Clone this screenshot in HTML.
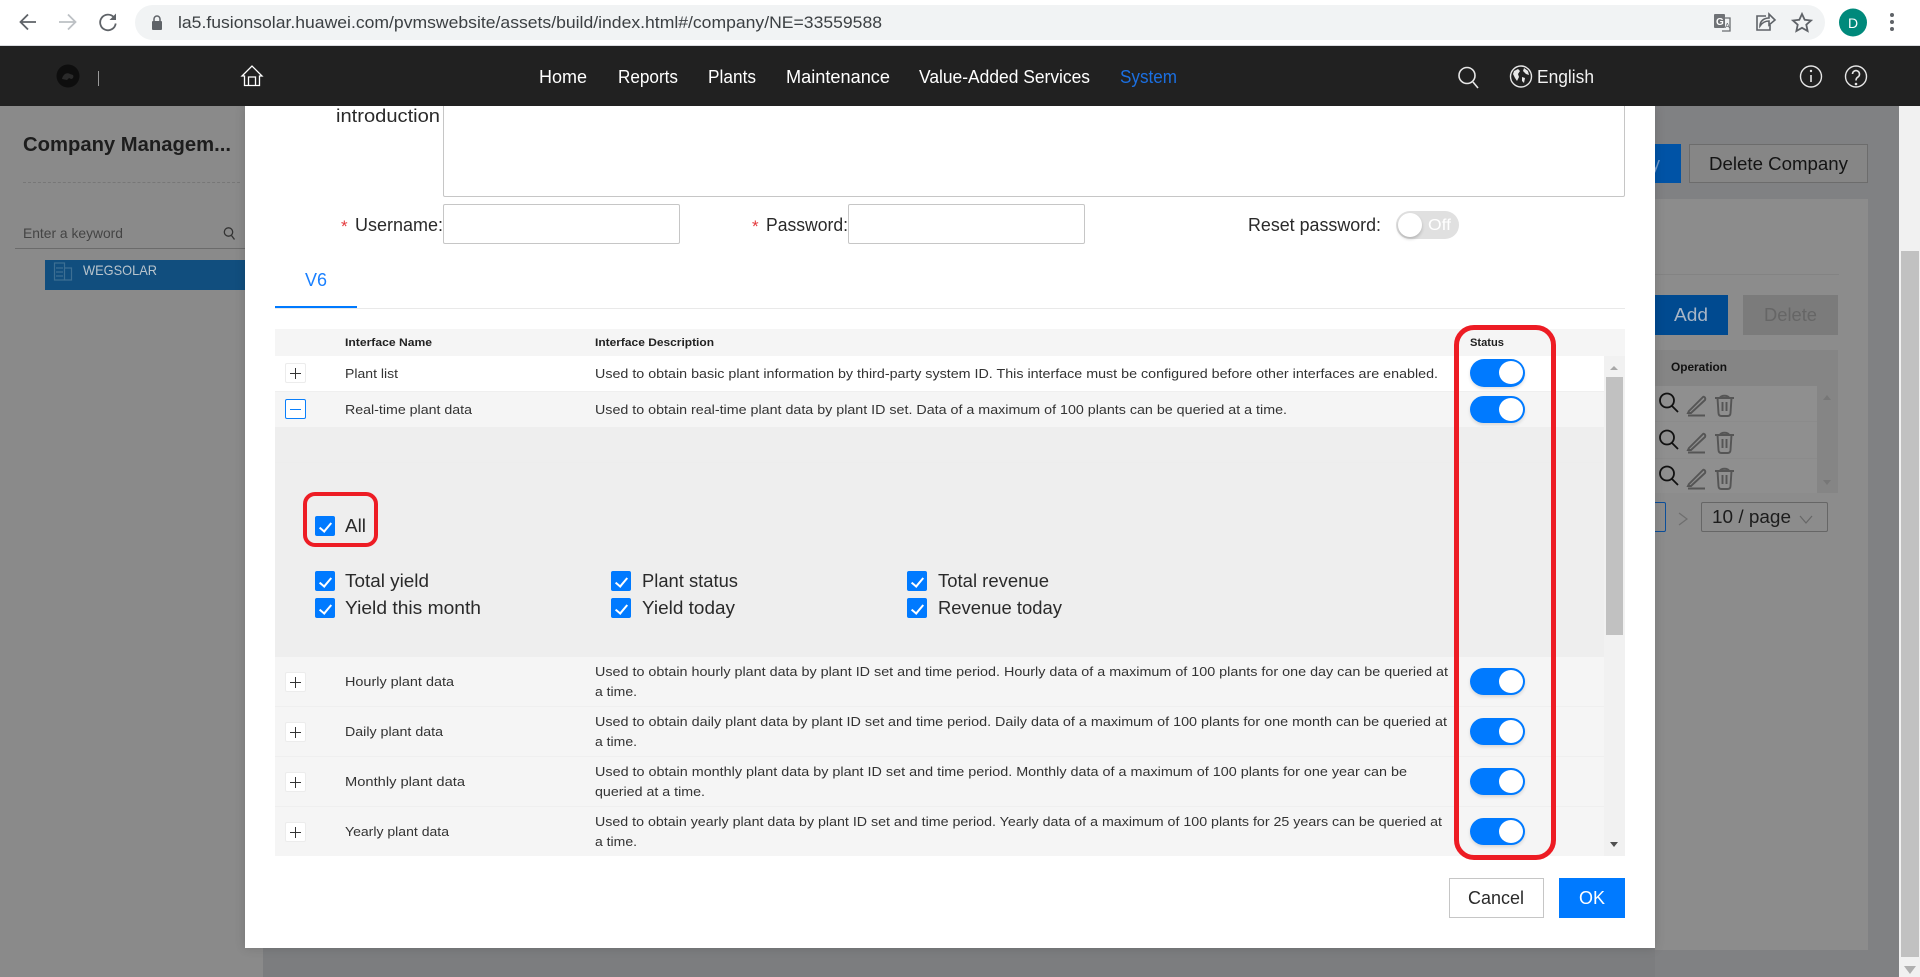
<!DOCTYPE html>
<html lang="en"><head><meta charset="utf-8"><title>Company Management</title>
<style>
html,body{margin:0;padding:0;width:1920px;height:977px;overflow:hidden;background:#7c7d7f}
div{position:absolute;box-sizing:border-box}
svg{position:absolute;left:0;top:0}
text{font-family:"Liberation Sans",sans-serif}
.tg{width:55px;height:27px;border-radius:14px;background:#007aff;left:1470px;box-shadow:0 2px 3px rgba(0,0,0,.12)}
.tg:after{content:"";position:absolute;right:2px;top:2px;width:24px;height:23px;border-radius:50%;background:#fff}
.cb{width:20px;height:20px;border-radius:2px;background:#007aff}
.cb:after{content:"";position:absolute;left:7px;top:3.5px;width:5px;height:10px;border:solid #fff;border-width:0 2px 2px 0;transform:rotate(40deg)}
.pb{left:285px;width:21px;height:20px;background:#fff;border:1px solid #ececec;border-radius:2px}
.pb:before{content:"";position:absolute;left:4px;top:9px;width:11px;height:1px;background:#333}
.pb:after{content:"";position:absolute;left:9px;top:4px;width:1px;height:11px;background:#333}
</style></head><body>

<!-- browser chrome -->
<div style="left:0;top:0;width:1920px;height:46px;background:#fff;border-bottom:1px solid #dadce0"></div>
<div style="left:135px;top:5px;width:1690px;height:35px;border-radius:18px;background:#f1f3f4"></div>

<!-- backdrop page -->
<div style="left:0;top:106px;width:263px;height:871px;background:#8a8a8a"></div>
<div style="left:1655px;top:106px;width:244px;height:871px;background:#808183"></div>
<div style="left:1655px;top:199px;width:213px;height:751px;background:#8c8c8c"></div>
<div style="left:1899px;top:106px;width:21px;height:871px;background:#f1f1f1"></div>
<div style="left:1901px;top:251px;width:18px;height:706px;background:#c1c1c1"></div>
<div style="left:23px;top:182px;width:217px;border-top:1px dashed #777"></div>
<div style="left:15px;top:248px;width:230px;height:1px;background:#6b6b6b"></div>
<div style="left:45px;top:260px;width:200px;height:30px;background:#114e7e"></div>
<div style="left:1655px;top:144px;width:26px;height:39px;background:#0053a6"></div>
<div style="left:1689px;top:144px;width:179px;height:39px;border:1px solid #6c6c6c;background:#868686"></div>
<div style="left:1655px;top:274px;width:184px;height:1px;background:#838383"></div>
<div style="left:1655px;top:295px;width:73px;height:40px;background:#004a90"></div>
<div style="left:1743px;top:295px;width:95px;height:40px;background:#7b7b7b"></div>
<div style="left:1655px;top:350px;width:183px;height:143px;background:#858585"></div>
<div style="left:1655px;top:386px;width:162px;height:107px;background:#8f8f8f"></div>
<div style="left:1655px;top:421px;width:162px;height:1px;background:#8b8b8b"></div>
<div style="left:1655px;top:458px;width:162px;height:1px;background:#8b8b8b"></div>
<div style="left:1640px;top:502px;width:26px;height:30px;border:1px solid #0b4e9a;border-radius:2px"></div>
<div style="left:1701px;top:502px;width:127px;height:30px;border:1px solid #666;border-radius:2px"></div>

<!-- modal -->
<div style="left:245px;top:106px;width:1410px;height:842px;background:#fff;box-shadow:0 0 10px rgba(0,0,0,.15)"></div>
<div style="left:443px;top:100px;width:1182px;height:97px;background:#fff;border:1px solid #c6c6c6;border-radius:2px"></div>
<div style="left:443px;top:204px;width:237px;height:40px;background:#fff;border:1px solid #c6c6c6;border-radius:2px"></div>
<div style="left:848px;top:204px;width:237px;height:40px;background:#fff;border:1px solid #c6c6c6;border-radius:2px"></div>
<div style="left:1396px;top:211px;width:63px;height:28px;border-radius:14px;background:#e0e0e0"></div>
<div style="left:1398px;top:213px;width:24px;height:24px;border-radius:50%;background:#fff;box-shadow:0 2px 3px rgba(0,0,0,.2)"></div>

<div style="left:275px;top:308px;width:1350px;height:1px;background:#e9e9e9"></div>
<div style="left:275px;top:306px;width:82px;height:2px;background:#007aff"></div>

<!-- table -->
<div style="left:275px;top:329px;width:1350px;height:27px;background:#f5f5f5"></div>
<div style="left:275px;top:356px;width:1329px;height:35px;background:#fff"></div>
<div style="left:275px;top:391px;width:1329px;height:36px;background:#f5f5f5;border-top:1px solid #efefef"></div>
<div style="left:275px;top:427px;width:1329px;height:230px;background:#eee"></div>
<div style="left:275px;top:462px;width:1329px;height:1px;background:#ededed"></div>
<div style="left:275px;top:657px;width:1329px;height:50px;background:#f5f5f5;border-bottom:1px solid #efefef"></div>
<div style="left:275px;top:707px;width:1329px;height:50px;background:#f5f5f5;border-bottom:1px solid #efefef"></div>
<div style="left:275px;top:757px;width:1329px;height:50px;background:#f5f5f5;border-bottom:1px solid #efefef"></div>
<div style="left:275px;top:807px;width:1329px;height:49px;background:#f5f5f5"></div>
<div style="left:1604px;top:356px;width:21px;height:500px;background:#f1f1f1"></div>
<div style="left:1606px;top:377px;width:17px;height:258px;background:#c1c1c1"></div>

<div class="pb" style="top:363px"></div>
<div style="left:285px;top:399px;width:21px;height:20px;background:#fff;border:1px solid #0a7ffb;border-radius:2px"></div>
<div style="left:290px;top:409px;width:11px;height:1px;background:#0a7ffb"></div>
<div class="pb" style="top:672px"></div>
<div class="pb" style="top:722px"></div>
<div class="pb" style="top:772px"></div>
<div class="pb" style="top:822px"></div>

<div class="cb" style="left:315px;top:516px"></div>
<div class="cb" style="left:315px;top:571px"></div>
<div class="cb" style="left:315px;top:598px"></div>
<div class="cb" style="left:611px;top:571px"></div>
<div class="cb" style="left:611px;top:598px"></div>
<div class="cb" style="left:907px;top:571px"></div>
<div class="cb" style="left:907px;top:598px"></div>

<div class="tg" style="top:359px;height:28px"></div>
<div class="tg" style="top:396px"></div>
<div class="tg" style="top:668px"></div>
<div class="tg" style="top:718px"></div>
<div class="tg" style="top:768px"></div>
<div class="tg" style="top:818px"></div>

<div style="left:1449px;top:878px;width:95px;height:40px;background:#fff;border:1px solid #c6c6c6"></div>
<div style="left:1559px;top:878px;width:66px;height:40px;background:#007aff"></div>

<!-- red annotation boxes -->
<div style="left:303px;top:492px;width:75px;height:55px;border:4px solid #ed1c24;border-radius:12px"></div>
<div style="left:1454px;top:325px;width:102px;height:535px;border:5px solid #ed1c24;border-radius:20px"></div>

<!-- header bar -->
<div style="left:0;top:46px;width:1920px;height:60px;background:#212121"></div>

<svg width="1920" height="977" viewBox="0 0 1920 977" xmlns="http://www.w3.org/2000/svg">
<!-- chrome icons -->
<g fill="none" stroke="#5f6368" stroke-width="1.800">
<path d="M36 22H21M28 14.500L20.500 22l7.500 7.500"/>
<path d="M59 22h16M68 14.500l7.500 7.500-7.500 7.500" stroke="#bcc0c4"/>
<path d="M114 17.500a7.800 7.800 0 1 0 1.700 6"/>
</g>
<path d="M116 13.500v6.500h-6.500z" fill="#5f6368"/>
<rect x="152" y="21" width="10" height="9" rx="1" fill="#5f6368"/>
<path d="M154 21v-2a3 3 0 0 1 6 0v2" fill="none" stroke="#5f6368" stroke-width="1.500"/>
<text x="178" y="28" font-size="17" fill="#3c4043" textLength="704" lengthAdjust="spacingAndGlyphs">la5.fusionsolar.huawei.com/pvmswebsite/assets/build/index.html#/company/NE=33559588</text>
<path d="M1722 18h8v13h-8" fill="#f1f3f4" stroke="#6a6d70" stroke-width="1.300"/>
<rect x="1714" y="14" width="11" height="14" rx="1" fill="#6f7276"/>
<text x="1716" y="25" font-size="10" font-weight="700" fill="#fff">G</text>
<text x="1725" y="28" font-size="7" fill="#5f6368">A</text>
<path d="M1766 16h-9v14h13v-5M1760 26c0-5 4-8 9-8v-4l6 6-6 5v-4c-4 0-7 2-9 5z" fill="none" stroke="#5f6368" stroke-width="1.600"/>
<path d="M1802 14l2.700 5.800 6.300.7-4.700 4.200 1.300 6.300-5.600-3.200-5.600 3.200 1.300-6.300-4.700-4.200 6.300-.7z" fill="none" stroke="#5f6368" stroke-width="1.800"/>
<circle cx="1853" cy="22.500" r="14" fill="#00897b"/>
<text x="1853" y="28" font-size="14" fill="#fff" text-anchor="middle">D</text>
<g fill="#5f6368"><circle cx="1892" cy="15" r="2"/><circle cx="1892" cy="22" r="2"/><circle cx="1892" cy="29" r="2"/></g>

<!-- header icons -->
<circle cx="68" cy="76" r="11.500" fill="#0e0e0e"/>
<path d="M62 79c1-5 5-7 8-5l3 1c1 2 0 4-2 4l-2-1-2 2z" fill="#2a2a2a"/>
<rect x="98" y="71" width="1" height="15" fill="#9a9a9a"/>
<path d="M242 77l10-10 10 10h-2.500v9.500h-4v-8.500h-7v8.500h-4V77z M247.500 86.500h10" fill="none" stroke="#fff" stroke-width="1.300" transform="translate(0 -1)"/>
<g fill="#fff" font-size="18">
<text x="539" y="83" textLength="48" lengthAdjust="spacingAndGlyphs">Home</text>
<text x="618" y="83" textLength="60" lengthAdjust="spacingAndGlyphs">Reports</text>
<text x="708" y="83" textLength="48" lengthAdjust="spacingAndGlyphs">Plants</text>
<text x="786" y="83" textLength="104" lengthAdjust="spacingAndGlyphs">Maintenance</text>
<text x="919" y="83" textLength="171" lengthAdjust="spacingAndGlyphs">Value-Added Services</text>
<text x="1120" y="83" textLength="57" lengthAdjust="spacingAndGlyphs" fill="#1b6fe0">System</text>
<text x="1537" y="83" textLength="57" lengthAdjust="spacingAndGlyphs" fill="#f2f2f2">English</text>
</g>
<g fill="none" stroke="#e6e6e6" stroke-width="1.600">
<circle cx="1467" cy="75.500" r="8"/><path d="M1473 82l5 6"/>
<circle cx="1521" cy="76.500" r="10.500" stroke-width="1.400"/>
<circle cx="1811" cy="76.500" r="10.500" stroke-width="1.400"/>
<circle cx="1856" cy="76.500" r="10.500" stroke-width="1.400"/>
<path d="M1852.500 74a3.500 3.500 0 1 1 5.500 3c-1.300 1-2 1.500-2 3.500"/>
<path d="M1811 75v7"/>
</g>
<path d="M1514 71l4-2 2 2-2 3 1 3-2 4-2-3-2-4zM1524 68l4 3 1 4-3-1-3-3zM1522 77l3 1-1 5-2-2z" fill="#e6e6e6"/>
<circle cx="1811" cy="71" r="1.200" fill="#e6e6e6"/><circle cx="1856" cy="84" r="1.300" fill="#e6e6e6"/>

<!-- backdrop text -->
<text x="23" y="151" font-size="20" font-weight="700" fill="#1d1d1d" textLength="208" lengthAdjust="spacingAndGlyphs">Company Managem...</text>
<text x="23" y="238" font-size="14" fill="#444" textLength="100" lengthAdjust="spacingAndGlyphs">Enter a keyword</text>
<g fill="none" stroke="#333" stroke-width="1.300"><circle cx="228.500" cy="232" r="4.200"/><path d="M231.500 235.500l3 4"/></g>
<g fill="none" stroke="#3d6f93" stroke-width="1.200"><rect x="54.500" y="263" width="10" height="17"/><path d="M64.500 268h7v12h-7M56 268h7M56 272h7M56 276h7"/></g>
<text x="83" y="275" font-size="14" fill="#b9c4cc" textLength="74" lengthAdjust="spacingAndGlyphs">WEGSOLAR</text>
<text x="1709" y="170" font-size="18" fill="#141414" textLength="139" lengthAdjust="spacingAndGlyphs">Delete Company</text>
<text x="1674" y="321" font-size="18" fill="#a9b6c6" textLength="34" lengthAdjust="spacingAndGlyphs">Add</text>
<text x="1764" y="321" font-size="18" fill="#666" textLength="53" lengthAdjust="spacingAndGlyphs">Delete</text>
<text x="1671" y="371" font-size="12" font-weight="700" fill="#111" textLength="56" lengthAdjust="spacingAndGlyphs">Operation</text>
<path d="M1823 400l4-5 4 5zM1823 480l4 5 4-5z" fill="#777"/>
<g fill="none" stroke="#111" stroke-width="1.800">
<circle cx="1667" cy="400.500" r="7"/><path d="M1672 406l6 6"/>
<circle cx="1667" cy="437.500" r="7"/><path d="M1672 443l6 6"/>
<circle cx="1667" cy="473.500" r="7"/><path d="M1672 479l6 6"/>
</g>
<g fill="none" stroke="#555" stroke-width="1.900">
<path d="M1689 411l14-14c1-1 3 1 2 3l-14 13h-3zM1688 415.500h17"/>
<path d="M1689 448l14-14c1-1 3 1 2 3l-14 13h-3zM1688 452.500h17"/>
<path d="M1689 484l14-14c1-1 3 1 2 3l-14 13h-3zM1688 488.500h17"/>
<path d="M1715 398h19M1720 398c0-3 9-3 9 0M1717.500 398l1 15c0 2 1 3 3 3h6c2 0 3-1 3-3l1-15M1722.500 402v9M1726.500 402v9"/>
<path d="M1715 435h19M1720 435c0-3 9-3 9 0M1717.500 435l1 15c0 2 1 3 3 3h6c2 0 3-1 3-3l1-15M1722.500 439v9M1726.500 439v9"/>
<path d="M1715 471h19M1720 471c0-3 9-3 9 0M1717.500 471l1 15c0 2 1 3 3 3h6c2 0 3-1 3-3l1-15M1722.500 475v9M1726.500 475v9"/>
</g>
<path d="M1679 513l8 6-8 6" fill="none" stroke="#6e6e6e" stroke-width="1.200"/>
<text x="1712" y="523" font-size="18" fill="#1c1c1c" textLength="79" lengthAdjust="spacingAndGlyphs">10 / page</text>
<path d="M1800 516l6 7 6-7" fill="none" stroke="#666" stroke-width="1.200"/>
<path d="M1904 966h12l-6 8z" fill="#b0b0b0"/>

<!-- form -->
<g font-size="18" fill="#2a2a2a">
<text x="336" y="122" textLength="104" lengthAdjust="spacingAndGlyphs">introduction</text>
<text x="341" y="232" fill="#e4393c" font-size="17">*</text>
<text x="355" y="231" textLength="88" lengthAdjust="spacingAndGlyphs">Username:</text>
<text x="752" y="232" fill="#e4393c" font-size="17">*</text>
<text x="766" y="231" textLength="82" lengthAdjust="spacingAndGlyphs">Password:</text>
<text x="1248" y="231" textLength="133" lengthAdjust="spacingAndGlyphs">Reset password:</text>
</g>
<text x="1428" y="230" font-size="16" fill="#fff" textLength="23" lengthAdjust="spacingAndGlyphs">Off</text>
<text x="305" y="286" font-size="18" fill="#1a80ff" textLength="22" lengthAdjust="spacingAndGlyphs">V6</text>

<!-- table text -->
<g font-size="11" font-weight="700" fill="#222">
<text x="345" y="346" textLength="87" lengthAdjust="spacingAndGlyphs">Interface Name</text>
<text x="595" y="346" textLength="119" lengthAdjust="spacingAndGlyphs">Interface Description</text>
<text x="1470" y="346" textLength="34" lengthAdjust="spacingAndGlyphs">Status</text>
</g>
<g font-size="13" fill="#333">
<text x="345" y="378" textLength="53" lengthAdjust="spacingAndGlyphs">Plant list</text>
<text x="345" y="414" textLength="127" lengthAdjust="spacingAndGlyphs">Real-time plant data</text>
<text x="345" y="686" textLength="109" lengthAdjust="spacingAndGlyphs">Hourly plant data</text>
<text x="345" y="736" textLength="98" lengthAdjust="spacingAndGlyphs">Daily plant data</text>
<text x="345" y="786" textLength="120" lengthAdjust="spacingAndGlyphs">Monthly plant data</text>
<text x="345" y="836" textLength="104" lengthAdjust="spacingAndGlyphs">Yearly plant data</text>
<text x="595" y="378" textLength="843" lengthAdjust="spacingAndGlyphs">Used to obtain basic plant information by third-party system ID. This interface must be configured before other interfaces are enabled.</text>
<text x="595" y="414" textLength="692" lengthAdjust="spacingAndGlyphs">Used to obtain real-time plant data by plant ID set. Data of a maximum of 100 plants can be queried at a time.</text>
<text x="595" y="676" textLength="853" lengthAdjust="spacingAndGlyphs">Used to obtain hourly plant data by plant ID set and time period. Hourly data of a maximum of 100 plants for one day can be queried at</text>
<text x="595" y="696" textLength="42" lengthAdjust="spacingAndGlyphs">a time.</text>
<text x="595" y="726" textLength="852" lengthAdjust="spacingAndGlyphs">Used to obtain daily plant data by plant ID set and time period. Daily data of a maximum of 100 plants for one month can be queried at</text>
<text x="595" y="746" textLength="42" lengthAdjust="spacingAndGlyphs">a time.</text>
<text x="595" y="776" textLength="812" lengthAdjust="spacingAndGlyphs">Used to obtain monthly plant data by plant ID set and time period. Monthly data of a maximum of 100 plants for one year can be</text>
<text x="595" y="796" textLength="110" lengthAdjust="spacingAndGlyphs">queried at a time.</text>
<text x="595" y="826" textLength="847" lengthAdjust="spacingAndGlyphs">Used to obtain yearly plant data by plant ID set and time period. Yearly data of a maximum of 100 plants for 25 years can be queried at</text>
<text x="595" y="846" textLength="42" lengthAdjust="spacingAndGlyphs">a time.</text>
</g>
<g font-size="18" fill="#2a2a2a">
<text x="345" y="532" textLength="21" lengthAdjust="spacingAndGlyphs">All</text>
<text x="345" y="587" textLength="84" lengthAdjust="spacingAndGlyphs">Total yield</text>
<text x="345" y="614" textLength="136" lengthAdjust="spacingAndGlyphs">Yield this month</text>
<text x="642" y="587" textLength="96" lengthAdjust="spacingAndGlyphs">Plant status</text>
<text x="642" y="614" textLength="93" lengthAdjust="spacingAndGlyphs">Yield today</text>
<text x="938" y="587" textLength="111" lengthAdjust="spacingAndGlyphs">Total revenue</text>
<text x="938" y="614" textLength="124" lengthAdjust="spacingAndGlyphs">Revenue today</text>
</g>
<path d="M1610 370l4-4 4 4z" fill="#a8a8a8"/>
<path d="M1610 842l4 5 4-5z" fill="#505050"/>
<text x="1468" y="904" font-size="18" fill="#2a2a2a" textLength="56" lengthAdjust="spacingAndGlyphs">Cancel</text>
<text x="1579" y="904" font-size="18" fill="#fff" textLength="26" lengthAdjust="spacingAndGlyphs">OK</text>
<text x="1651" y="170" font-size="18" fill="#6d93c0">y</text>
</svg>
<div style="left:1625px;top:144px;width:30px;height:39px;background:#fff"></div>
</body></html>
